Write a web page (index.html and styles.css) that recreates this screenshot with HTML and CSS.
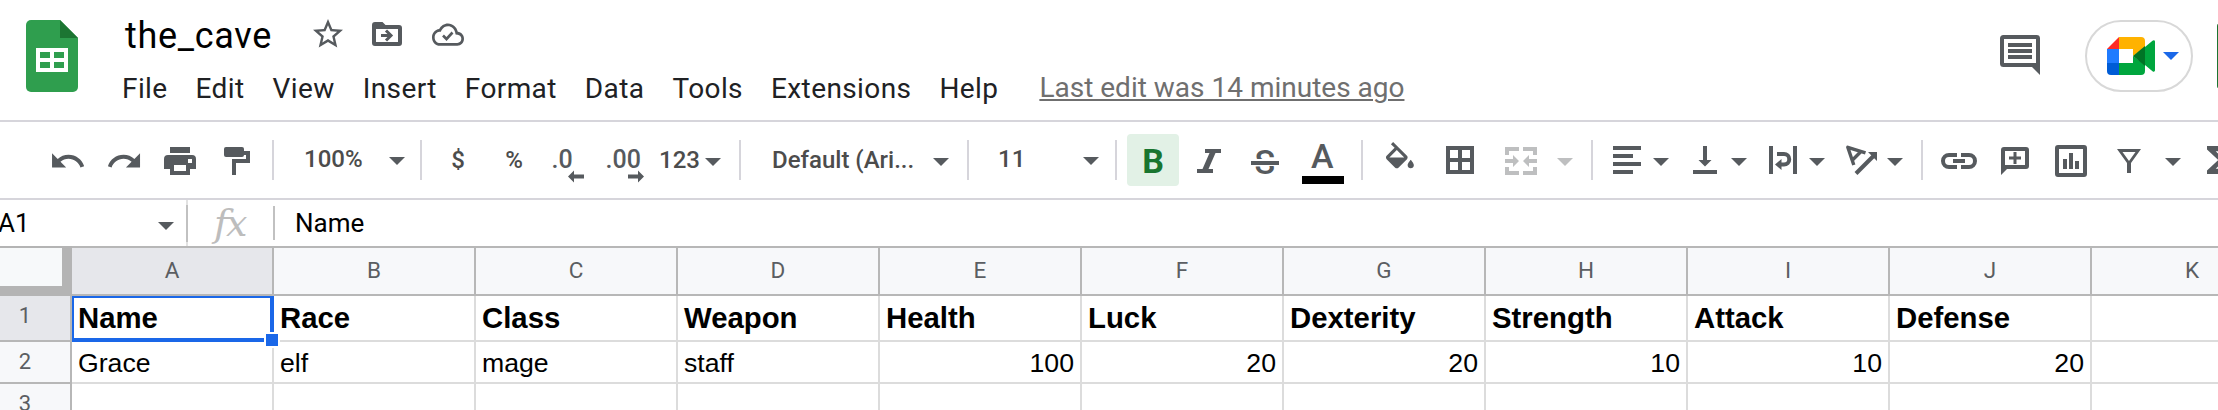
FILE: index.html
```html
<!DOCTYPE html>
<html lang="en">
<head>
<meta charset="utf-8">
<title>the_cave</title>
<link rel="stylesheet" href="styles.css">
</head>
<body>
<header class="header">
  <svg class="logo" viewBox="0 0 104 120"><path fill="#2f9e4e" d="M31 20h29l18 18v49a5 5 0 0 1-5 5H31a5 5 0 0 1-5-5V25a5 5 0 0 1 5-5z"/><path fill="#1c7532" d="M60 20l18 18H60z"/><path fill="#fff" fill-rule="evenodd" d="M36 48h32v24H36zM40 52v6h10v-6zM54 52v6h10v-6zM40 62v6h10v-6zM54 62v6h10v-6z"/></svg>
  <div class="doc">
    <div class="title-row">
      <span class="title">the_cave</span>
      <svg class="title-icons" viewBox="300 10 180 52" fill="#565a5e">
        <path transform="translate(310 16) scale(1.5)" d="M22 9.24l-7.19-.62L12 2 9.19 8.63 2 9.24l5.46 4.73L5.82 21 12 17.27 18.18 21l-1.63-7.03L22 9.24zM12 15.4l-3.76 2.27 1-4.28-3.32-2.88 4.38-.38L12 6.1l1.71 4.04 4.38.38-3.32 2.88 1 4.28L12 15.4z"/>
        <path fill-rule="evenodd" d="M375 22h7.500l3 3H399a3 3 0 0 1 3 3v15a3 3 0 0 1-3 3H375a3 3 0 0 1-3-3V25a3 3 0 0 1 3-3zM376 29v13h22V29z"/>
        <path fill="none" stroke="#565a5e" stroke-width="3" d="M381 35.500h9M386 30.500l5 5-5 5"/>
        <path transform="translate(432 17.800) scale(1.333 1.400)" d="M19.350 10.040C18.670 6.590 15.640 4 12 4 9.110 4 6.600 5.640 5.350 8.040 2.340 8.360 0 10.910 0 14c0 3.310 2.690 6 6 6h13c2.760 0 5-2.240 5-5 0-2.640-2.050-4.780-4.650-4.960zM19 18H6c-2.210 0-4-1.790-4-4 0-2.050 1.530-3.760 3.560-3.970l1.070-.11.5-.95C8.080 7.140 9.940 6 12 6c2.620 0 4.880 1.860 5.390 4.430l.3 1.500 1.530.11c1.560.1 2.780 1.410 2.780 2.960 0 1.650-1.350 3-3 3z"/>
        <path fill="none" stroke="#565a5e" stroke-width="2.600" d="M443 35.500l3.500 3.500 6-6.500"/>
      </svg>
    </div>
    <nav class="menu">
      <span>File</span><span>Edit</span><span>View</span><span>Insert</span><span>Format</span><span>Data</span><span>Tools</span><span>Extensions</span><span>Help</span><span class="last-edit">Last edit was 14 minutes ago</span>
    </nav>
  </div>
  <svg class="actions" viewBox="1960 0 258 120">
    <path fill="#565a5e" fill-rule="evenodd" d="M2003.500 35h33a3.500 3.500 0 0 1 3.500 3.500V75l-8-8h-28.500a3.500 3.500 0 0 1-3.500-3.500v-25a3.500 3.500 0 0 1 3.500-3.500zM2004 39v24h32V39z"/>
    <path fill="#565a5e" d="M2008 43h24v4h-24zM2008 49h24v4h-24zM2008 55h24v4h-24z"/>
    <rect x="2086" y="21" width="106" height="70" rx="35" fill="#fff" stroke="#d8d8d8" stroke-width="2"/>
    <path fill="#ff2b25" d="M2119 37v12h-12z"/>
    <path fill="#1f7bff" d="M2107 49h12v14h-12z"/>
    <path fill="#005cd6" d="M2107 63h12v12h-8a4 4 0 0 1-4-4z"/>
    <path fill="#ffb200" d="M2119 37h22a4 4 0 0 1 4 4v7l-12 8v-7h-14z"/>
    <path fill="#00a63e" d="M2119 63h14v-7l12 9v6a4 4 0 0 1-4 4h-22zM2145 47l7.500-6.200c1.200-1 2.500-.5 2.500.9v28.600c0 1.400-1.300 1.900-2.500.9L2145 65z"/>
    <path fill="#007426" d="M2145 46v20l-12-10z"/>
    <path fill="#1a68e8" d="M2163 52h16l-8 8z"/>
    <path fill="#1b7431" d="M2217 26q0-2 1-2v64q-1 0-1-2z"/>
  </svg>
</header>

<div class="toolbar">
  <svg class="history" viewBox="40 122 232 76" fill="#565a5e">
    <path transform="translate(48.900 142.300) scale(1.570)" d="M12.500 8c-2.650 0-5.050.99-6.900 2.600L2 7v9h9l-3.620-3.620c1.390-1.160 3.160-1.880 5.120-1.880 3.540 0 6.550 2.310 7.600 5.500l2.370-.78C21.080 11.030 17.150 8 12.500 8z"/>
    <path transform="translate(105.500 142.300) scale(1.570)" d="M18.400 10.600C16.550 8.990 14.150 8 11.500 8c-4.650 0-8.580 3.030-9.960 7.220L3.900 16c1.050-3.190 4.050-5.500 7.600-5.500 1.950 0 3.730.72 5.120 1.880L13 16h9V7l-3.600 3.600z"/>
    <path fill-rule="evenodd" d="M170 147h20v6h-20zM168 155h24a4 4 0 0 1 4 4v10h-6v6h-20v-6h-6v-10a4 4 0 0 1 4-4zM174 165v6h12v-6zM188 159v4h4v-4z"/>
    <rect x="224" y="147" width="20" height="10" rx="2"/><path d="M244 151h6v12h-14v12h-4v-16h14v-4h-2z"/>
  </svg>
  <i class="sep"></i>
  <div class="picker zoom"><span class="up">100%</span><svg class="caret up" viewBox="0 0 16 8"><path d="M0 0h16l-8 8z"/></svg></div>
  <i class="sep"></i>
  <span class="sym">$</span><span class="sym">%</span>
  <svg class="decimals" viewBox="542 122 112 76" fill="#565a5e"><text class="dec" x="551.500" y="168">.0</text><path d="M568 176.500l6-6v4h10v4h-10v4z"/><text class="dec" x="605.500" y="168">.00</text><path d="M644 176.500l-6-6v4h-10v4h10v4z"/></svg>
  <div class="picker number"><span>123</span><svg class="caret" viewBox="0 0 16 8"><path d="M0 0h16l-8 8z"/></svg></div>
  <i class="sep"></i>
  <div class="picker font"><span>Default (Ari...</span><svg class="caret down" viewBox="0 0 16 8"><path d="M0 0h16l-8 8z"/></svg></div>
  <i class="sep"></i>
  <div class="picker size"><span class="up">11</span><svg class="caret up" viewBox="0 0 16 8"><path d="M0 0h16l-8 8z"/></svg></div>
  <i class="sep"></i>
  <div class="bold">B</div>
  <svg class="styles" viewBox="1179 122 182 76" fill="#565a5e">
    <path d="M1205 149h16v4h-5.500l-7 16h4.500v4h-16v-4h5.500l7-16h-4.500z"/>
    <text class="strike" x="1254.500" y="173.500">S</text><path fill="#fff" d="M1250 159h30v7h-30z"/><path d="M1251 161h28v4h-28z"/>
    <text class="color" x="1311" y="168">A</text><path fill="#000" d="M1302 176h42v8h-42z"/>
  </svg>
  <i class="sep"></i>
  <svg class="cells" viewBox="1363 122 228 76" fill="#565a5e">
    <path transform="translate(1381.300 142) scale(1.550)" d="M16.560 8.940L7.620 0 6.210 1.410l2.380 2.380-5.150 5.150c-.59.59-.59 1.540 0 2.120l5.500 5.500c.29.29.68.44 1.060.44s.77-.15 1.060-.44l5.500-5.500c.59-.58.59-1.530 0-2.120zM5.210 10L10 5.210 14.790 10H5.210zM19 11.500s-2 2.170-2 3.500c0 1.100.9 2 2 2s2-.9 2-2c0-1.330-2-3.500-2-3.500z"/>
    <path fill-rule="evenodd" d="M1446 146h28v28h-28zM1450 150v8h8v-8zM1462 150v8h8v-8zM1450 162v8h8v-8zM1462 162v8h8v-8z"/>
    <path fill="#bebfc0" d="M1505 147h14v4h-10v4h-4zM1537 147h-14v4h10v4h4zM1505 175h14v-4h-10v-4h-4zM1537 175h-14v-4h10v-4h4zM1505 159h8v-4l6 6-6 6v-4h-8zM1537 159h-8v-4l-6 6 6 6v-4h8zM1557 158h16l-8 8z"/>
  </svg>
  <i class="sep"></i>
  <svg class="layout" viewBox="1593 122 328 76" fill="#565a5e">
    <path d="M1613 146h28v4h-28zM1613 154h20v4h-20zM1613 162h28v4h-28zM1613 170h20v4h-20zM1653 158h16l-8 8z"/>
    <path d="M1703 146h4v14h4.500l-6.500 6.500-6.500-6.500h4.500zM1693 170h24v4h-24zM1731 158h16l-8 8z"/>
    <path d="M1769 146h4v28h-4zM1793 146h4v28h-4zM1775 164.500l6.500-5.500v11zM1809 158h16l-8 8z"/>
    <path fill="none" stroke="#565a5e" stroke-width="4" d="M1777 154h7a5.250 5.250 0 0 1 0 10.500h-4"/>
    <path fill="none" stroke="#565a5e" stroke-width="3.400" stroke-linejoin="round" d="M1865.500 152.800L1847.800 147.300l6 17.700M1860.500 152l-7.500 7.500"/>
    <path fill="none" stroke="#565a5e" stroke-width="4" d="M1856 173.500l18-18"/>
    <path d="M1868 152h9v9zM1887 158h16l-8 8z"/>
  </svg>
  <i class="sep"></i>
  <svg class="insert" viewBox="1923 122 295 76" fill="#565a5e">
    <g fill="none" stroke="#565a5e" stroke-width="4"><path d="M1957 155h-8a6 6 0 0 0 0 12h8M1961 155h8a6 6 0 0 1 0 12h-8M1953 161h12"/><rect x="2057" y="147" width="28" height="28" rx="1"/></g>
    <path fill-rule="evenodd" d="M2004 147h22a3 3 0 0 1 3 3v16a3 3 0 0 1-3 3h-19l-6 6v-25a3 3 0 0 1 3-3zM2005 151v14h20v-14z"/>
    <path d="M2013.500 152h3v4.500h4.500v3h-4.500v4.500h-3v-4.500h-4.500v-3h4.500zM2063 159h4v10h-4zM2069 153h4v16h-4zM2075 161h4v8h-4z"/>
    <path fill-rule="evenodd" d="M2117 149h24l-10 14v10h-4v-10zM2122.500 152l6.500 9 6.500-9z"/>
    <path d="M2165 158h16l-8 8z"/>
    <path transform="translate(2196.500 139) scale(1.750)" d="M18 4H6v2l6.500 6L6 18v2h12v-3h-7l5-5-5-5h7z"/>
  </svg>
</div>

<div class="formula">
  <span class="ref">A1</span><svg class="caret" viewBox="0 0 16 8"><path d="M0 0h16l-8 8z"/></svg>
  <i class="edge"></i>
  <span class="fx">fx</span>
  <i class="divider"></i>
  <span class="value">Name</span>
</div>

<main class="sheet">
  <div class="corner"></div><div class="col on">A</div><div class="col">B</div><div class="col">C</div><div class="col">D</div><div class="col">E</div><div class="col">F</div><div class="col">G</div><div class="col">H</div><div class="col">I</div><div class="col">J</div><div class="col">K</div>
  <div class="row on">1</div><div class="cell head active">Name<i class="ring"></i><i class="handle"></i></div><div class="cell head">Race</div><div class="cell head">Class</div><div class="cell head">Weapon</div><div class="cell head">Health</div><div class="cell head">Luck</div><div class="cell head">Dexterity</div><div class="cell head">Strength</div><div class="cell head">Attack</div><div class="cell head">Defense</div><div class="cell"></div>
  <div class="row">2</div><div class="cell">Grace</div><div class="cell">elf</div><div class="cell">mage</div><div class="cell">staff</div><div class="cell num">100</div><div class="cell num">20</div><div class="cell num">20</div><div class="cell num">10</div><div class="cell num">10</div><div class="cell num">20</div><div class="cell"></div>
  <div class="row">3</div><div class="cell"></div><div class="cell"></div><div class="cell"></div><div class="cell"></div><div class="cell"></div><div class="cell"></div><div class="cell"></div><div class="cell"></div><div class="cell"></div><div class="cell"></div><div class="cell"></div>
</main>
</body>
</html>
```
FILE: styles.css
```css
* { box-sizing: border-box; }
body { margin: 0; width: 2218px; height: 410px; overflow: hidden; background: #fff; color: #000; font-family: Roboto, sans-serif; }
svg { display: block; flex: none; }

.header { display: flex; height: 122px; border-bottom: 2px solid #d6d5db; }
.logo { width: 104px; height: 120px; }
.doc { width: 1856px; padding-top: 10px; }
.title-row { display: flex; height: 52px; align-items: center; }
.title { width: 196px; padding-left: 21px; font-size: 36px; line-height: 52px; letter-spacing: 0.7px; white-space: nowrap; }
.title-icons { width: 180px; height: 52px; }
.menu { display: flex; gap: 28px; padding-left: 18px; font-size: 28px; line-height: 53px; letter-spacing: 0.4px; color: #202124; white-space: nowrap; }
.last-edit { margin-left: 13px; line-height: 51px; letter-spacing: 0; color: #6f6f6f; text-decoration: underline; text-decoration-thickness: 2px; text-underline-offset: 2px; }
.actions { width: 258px; height: 120px; }

.toolbar { display: flex; align-items: center; height: 78px; padding-left: 40px; border-bottom: 2px solid #d6d5db; font-size: 24px; font-weight: 500; line-height: 76px; color: #4c4c4c; overflow: hidden; }
.toolbar > svg { height: 76px; }
.sep { flex: none; width: 2px; height: 40px; background: #d6d5db; }
.history { width: 232px; }
.picker { display: flex; flex: none; align-items: center; justify-content: space-between; white-space: nowrap; }
.caret { width: 16px; height: 8px; fill: #565a5e; }
.up { transform: translateY(-1px); }
.picker .caret { margin-top: 3px; }
.zoom { width: 146px; padding: 0 15px 0 30px; }
.sym { flex: none; width: 56px; text-align: center; }
.sym:nth-of-type(1) { margin-left: 8px; }
.decimals { width: 112px; }
.dec { font-size: 25px; font-weight: 500; }
.number { width: 85px; padding: 0 18px 0 5px; }
.font { width: 226px; padding: 0 18px 0 31px; }
.size { width: 146px; padding: 0 16px 0 29px; }
.bold { flex: none; width: 52px; height: 52px; margin-left: 10px; border-radius: 4px; background: #e2f1e6; color: #19752f; font-size: 34px; font-weight: 700; line-height: 54px; text-align: center; }
.styles { width: 182px; }
.strike { font-size: 34px; font-weight: 500; }
.color { font-size: 34px; font-weight: 500; }
.cells { width: 228px; }
.layout { width: 328px; }
.insert { width: 295px; }

.formula { display: flex; align-items: center; height: 46px; font-size: 26px; line-height: 46px; }
.ref { width: 159px; margin-left: -2px; }
.formula .caret { margin-left: 1px; margin-top: 5px; }
.edge { width: 2px; height: 46px; margin-left: 12px; background: linear-gradient(#e2e2e2 5px, #c1c1c1 5px 42px, #e2e2e2 42px); }
.fx { width: 85px; padding-left: 26px; font: italic 38px/40px "DejaVu Serif", serif; letter-spacing: -2px; color: #bdbdbd; }
.divider { width: 2px; height: 34px; background: #c1c1c1; }
.value { padding-left: 20px; }

.sheet { display: grid; grid-template-columns: 72px repeat(11, 202px); grid-template-rows: 50px 46px 42px 42px; width: 2294px; font-family: "Liberation Sans", Arial, sans-serif; }
.corner { border: solid #b4b4b4; border-width: 2px 10px 10px 0; background: #f7f9fa; }
.col { border: solid #b7b7b7; border-width: 2px 2px 2px 0; background: #f7f8fa; font: 22.5px/45px Roboto, sans-serif; color: #5b5e62; text-align: center; }
.row { border: solid #b7b7b7; border-width: 0 2px 2px 0; padding-right: 20px; background: #f7f8fa; font: 22px/40px Roboto, sans-serif; color: #5b5e62; text-align: center; }
.on { background: #e6e7eb; }
.cell { position: relative; padding: 0 6px; border: solid #dcdcdc; border-width: 0 2px 2px 0; font-size: 26.67px; line-height: 42px; white-space: nowrap; }
.head { font-size: 29.33px; font-weight: 700; line-height: 44px; }
.num { text-align: right; }
.ring { position: absolute; inset: 0 -2px -2px 0; border: solid #1a67e8; border-width: 2px 4px 4px 2px; }
.handle { position: absolute; right: -8px; bottom: -8px; width: 16px; height: 16px; border: 2px solid #fff; background: #1a67e8; z-index: 1; }
```
